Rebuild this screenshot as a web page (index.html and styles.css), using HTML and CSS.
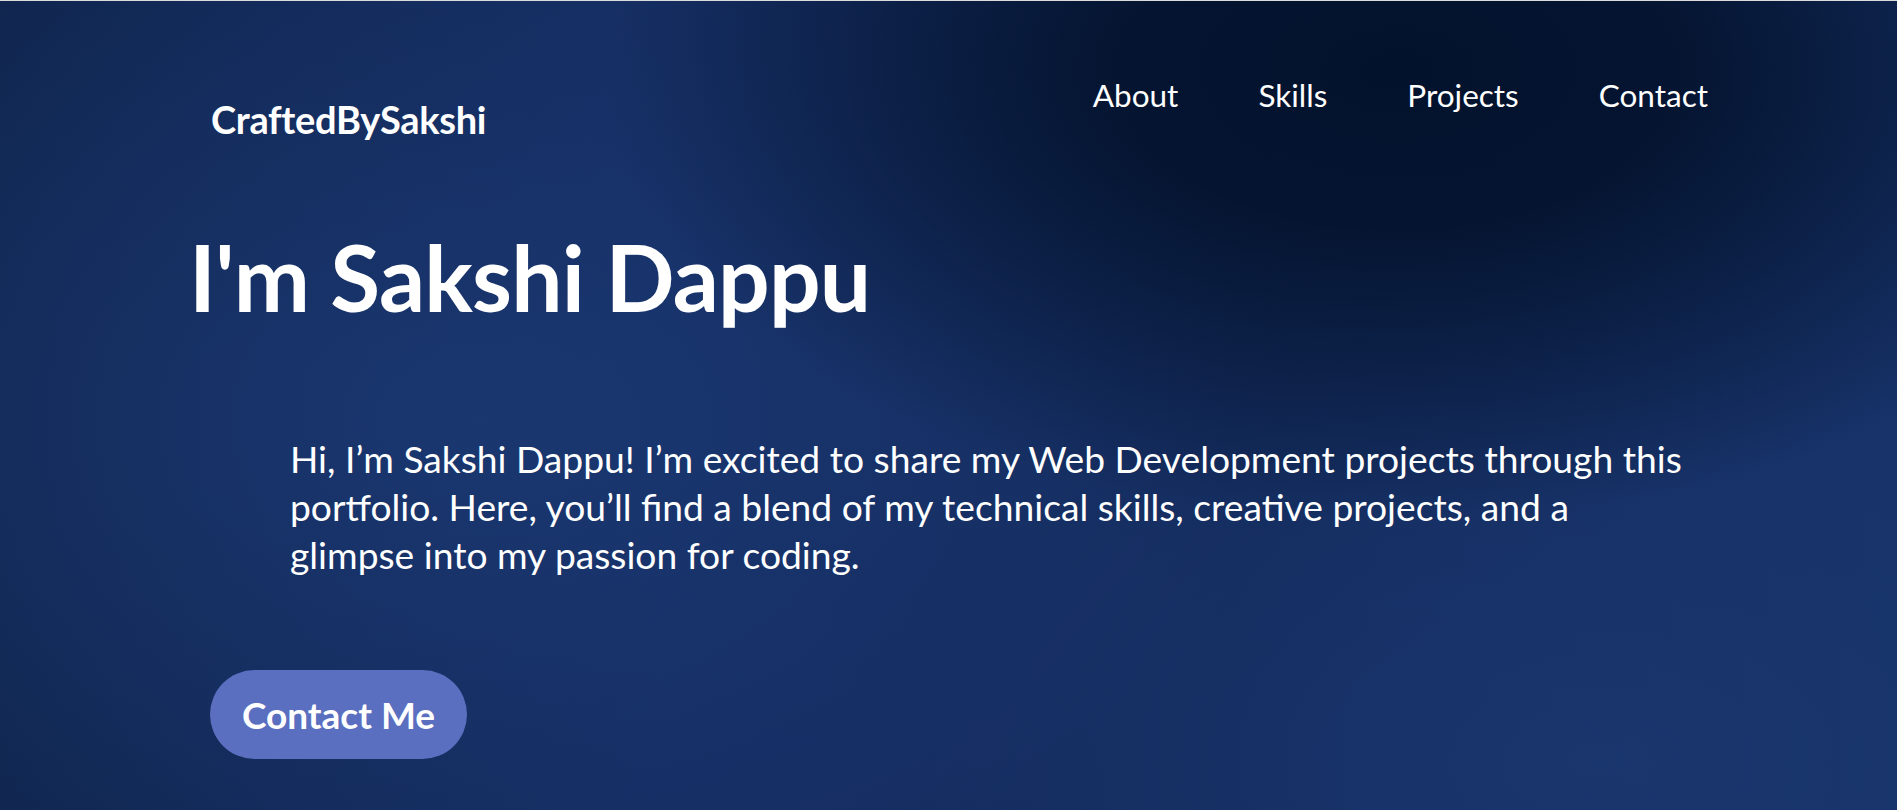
FILE: index.html
```html
<!DOCTYPE html>
<html lang="en">
<head>
<meta charset="utf-8">
<title>CraftedBySakshi</title>
<link rel="stylesheet" href="styles.css">
</head>
<body>
<div class="page">
  <header class="header">
    <div class="logo">CraftedBySakshi</div>
    <nav class="nav">
      <a href="#about">About</a>
      <a href="#skills">Skills</a>
      <a href="#projects">Projects</a>
      <a href="#contact">Contact</a>
    </nav>
  </header>
  <main class="hero">
    <h1 class="title">I'm Sakshi Dappu</h1>
    <p class="intro">Hi, I’m Sakshi Dappu! I’m excited to share my Web Development projects through this portfolio. Here, you’ll find a blend of my technical skills, creative projects, and a glimpse into my passion for coding.</p>
    <a class="btn" href="#contact">Contact Me</a>
  </main>
</div>
</body>
</html>
```
FILE: styles.css
```css
* { box-sizing: border-box; }
html, body { margin: 0; padding: 0; }
body {
  background: #dcdcdc;
  font-family: Lato, "Liberation Sans", sans-serif;
  color: #fff;
}
.page {
  margin-top: 1px;
  height: 809px;
  overflow: hidden;
  background:
    radial-gradient(ellipse 800px 450px at 1400px 70px, rgba(3,18,44,1) 0%, rgba(3,18,44,0.9) 35%, rgba(3,18,44,0) 100%),
    radial-gradient(ellipse 800px 520px at 480px 420px, rgba(27,56,114,0.9) 0%, rgba(27,56,114,0) 100%),
    radial-gradient(ellipse 700px 400px at 1600px 760px, rgba(26,54,110,0.9) 0%, rgba(26,54,110,0) 100%),
    linear-gradient(90deg, #10264f 0%, #152e63 35%, #142c5e 65%, #17336a 100%);
}
.header {
  display: flex;
  justify-content: space-between;
  align-items: flex-start;
  padding: 0 189px 0 211px;
}
.logo {
  font-size: 38px;
  font-weight: 700;
  line-height: 1;
  margin-top: 99px;
  letter-spacing: -0.3px;
}
.nav {
  display: flex;
  gap: 80px;
  margin-top: 79px;
}
.nav a {
  color: #fff;
  text-decoration: none;
  font-size: 31.5px;
  line-height: 1;
}
.hero {
  padding: 0 0 0 189px;
}
.title {
  margin: 0;
  padding-top: 93px;
  font-size: 91px;
  font-weight: 700;
  line-height: 1;
  letter-spacing: -0.8px;
}
.intro {
  margin: 113px 0 0 101px;
  max-width: 1405px;
  font-size: 37.2px;
  line-height: 48px;
}
.btn {
  display: inline-flex;
  align-items: center;
  justify-content: center;
  margin: 91px 0 0 21px;
  width: 257px;
  height: 89px;
  border-radius: 45px;
  background: #5a6fbf;
  color: #fff;
  text-decoration: none;
  font-size: 37px;
  font-weight: 700;
}
```
